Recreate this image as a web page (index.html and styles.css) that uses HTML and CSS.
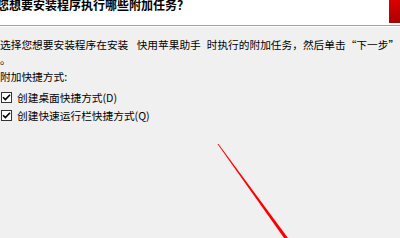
FILE: index.html
```html
<!DOCTYPE html>
<html lang="zh-CN">
<head>
<meta charset="utf-8">
<title>附加任务</title>
<link rel="stylesheet" href="styles.css">
</head>
<body>
<div class="page">
  <header class="header">
    <div class="title">您想要安装程序执行哪些附加任务？</div>
    <div class="logo"></div>
  </header>
  <main class="content">
    <p class="desc">选择您想要安装程序在安装 <span class="name">快用苹果助手</span> 时执行的附加任务，然后单击<span class="quote">“下一步”</span>。</p>
    <div class="group">
      <div class="group-label">附加快捷方式:</div>
      <label class="option"><span class="box"><svg viewBox="0 0 9 9" width="9" height="9"><path d="M1 4.2 L3.4 6.6 L8 1.8" fill="none" stroke="#000" stroke-width="1.6"/></svg></span><span>创建桌面快捷方式(D)</span></label>
      <label class="option"><span class="box"><svg viewBox="0 0 9 9" width="9" height="9"><path d="M1 4.2 L3.4 6.6 L8 1.8" fill="none" stroke="#000" stroke-width="1.6"/></svg></span><span>创建快速运行栏快捷方式(Q)</span></label>
    </div>
  </main>
  <svg class="arrow" width="400" height="238" viewBox="0 0 400 238">
    <polygon points="217.5,144 218.5,144 288,238 284,238" fill="#ff0000"/>
  </svg>
</div>
</body>
</html>
```
FILE: styles.css
```css
html, body {
  margin: 0;
  padding: 0;
}
body {
  background: #f0f0f0;
  font-family: "Noto Sans CJK SC", "Noto Sans", sans-serif;
  font-size: 10.7px;
  color: #000;
  text-spacing-trim: space-all;
}
.page {
  position: relative;
  width: 400px;
  height: 238px;
  overflow: hidden;
}
.header {
  display: flex;
  justify-content: space-between;
  align-items: flex-start;
  height: 25px;
  background: #fff;
  border-bottom: 1px solid #a0a0a0;
  box-shadow: 0 1px 0 #fff;
}
.title {
  font-weight: bold;
  font-size: 12px;
  line-height: 12px;
  margin-left: -3px;
  margin-top: -1px;
  white-space: nowrap;
}
.logo {
  width: 11px;
  height: 23px;
  background: linear-gradient(#dc0000, #a80000);
}
.content {
  padding-top: 11px;
}
.desc {
  margin: 0;
  line-height: 15px;
  width: 400px;
  line-break: anywhere;
}
.name {
  margin-left: 6px;
  margin-right: 3.5px;
}
.quote {
  font-feature-settings: "fwid";
}
.group {
  margin-top: 3px;
  display: flex;
  flex-direction: column;
}
.group-label {
  line-height: 14px;
  margin-bottom: 4px;
}
.option {
  display: flex;
  align-items: center;
  gap: 5px;
  height: 18px;
  padding-left: 1px;
}
.box {
  width: 11px;
  height: 11px;
  box-sizing: border-box;
  border: 1px solid #333;
  background: #fff;
  display: flex;
  align-items: center;
  justify-content: center;
}
.box svg {
  display: block;
}
.arrow {
  position: absolute;
  left: 0;
  top: 0;
}
```
